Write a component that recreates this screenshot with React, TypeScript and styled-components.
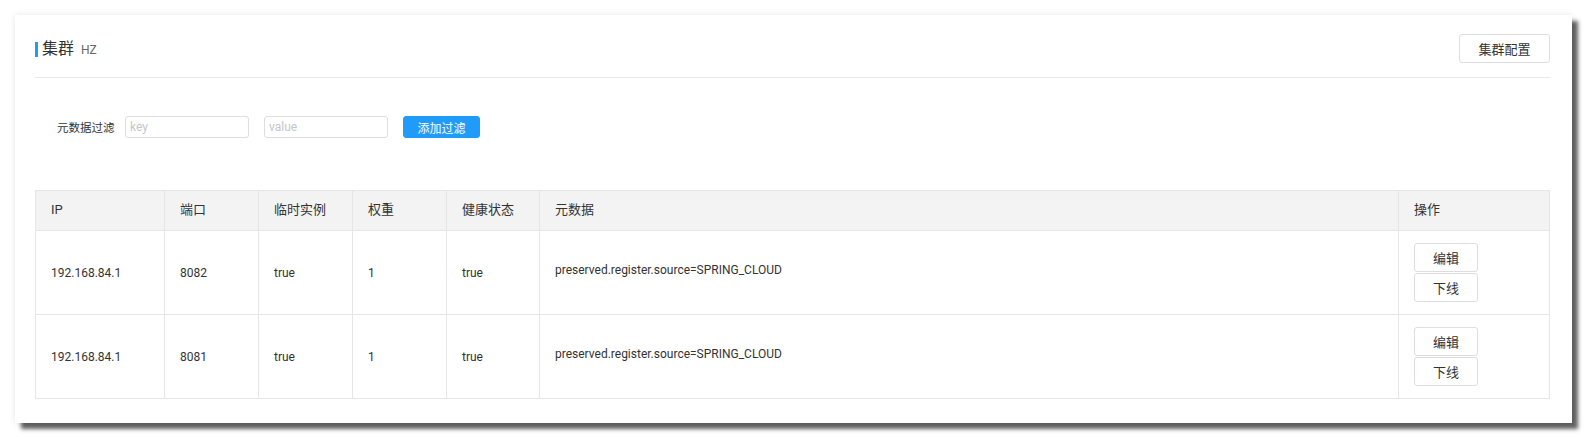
import React from "react";
import styled, { createGlobalStyle } from "styled-components";

const GlobalStyle = createGlobalStyle`
  html, body { margin: 0; padding: 0; background: #fff; }
  body {
    font-family: Roboto, "Noto Sans CJK SC", "Helvetica Neue", Arial, sans-serif;
    color: #333;
    font-size: 12px;
  }
  * { box-sizing: border-box; }
`;

const Page = styled.div`
  padding: 15px 15px 16px 15px;
`;

const Card = styled.div`
  background: #fff;
  width: 1557px;
  padding: 19px 22px 24px 20px;
  box-shadow: 6px 6px 4px rgba(0, 0, 0, 0.62), 0 0 6px rgba(0, 0, 0, 0.1);
`;

const Header = styled.div`
  display: flex;
  align-items: center;
  justify-content: space-between;
  padding-bottom: 14px;
  border-bottom: 1px solid #e8e8e8;
`;

const Title = styled.div`
  display: flex;
  align-items: baseline;
`;

const TitleMain = styled.span`
  position: relative;
  font-size: 16px;
  color: #333;
  padding-left: 7px;
  line-height: 20px;
  &::before {
    content: "";
    position: absolute;
    left: 0;
    top: 3px;
    width: 3px;
    height: 15px;
    background: #209bfa;
  }
`;

const TitleSub = styled.span`
  font-size: 12px;
  color: #666;
  margin-left: 7px;
`;

const OutlineButton = styled.button<{ $w: number; $h: number; $fs: number }>`
  width: ${(p) => p.$w}px;
  height: ${(p) => p.$h}px;
  padding: 0;
  background: #fff;
  border: 1px solid #dcdee3;
  border-radius: 3px;
  color: #333;
  font-family: inherit;
  font-size: ${(p) => p.$fs}px;
  cursor: pointer;
  display: block;
`;

const FilterRow = styled.div`
  display: flex;
  align-items: center;
  margin-top: 38px;
  padding-left: 22px;
`;

const FilterLabel = styled.label`
  width: 60px;
  font-size: 11.5px;
  color: #333;
  margin-right: 8px;
  white-space: nowrap;
`;

const FilterInput = styled.input`
  width: 124px;
  height: 22px;
  border: 1px solid #dcdee3;
  border-radius: 3px;
  padding: 0 4px;
  font-family: inherit;
  font-size: 12px;
  color: #333;
  margin-right: 15px;
  outline: none;
  &::placeholder { color: #c4c6cf; }
`;

const PrimaryButton = styled.button`
  width: 77px;
  height: 22px;
  padding: 0;
  background: #209bfa;
  border: 1px solid #209bfa;
  border-radius: 3px;
  color: #fff;
  font-family: inherit;
  font-size: 12px;
`;

const Table = styled.table`
  margin-top: 52px;
  width: 100%;
  border-collapse: collapse;
  table-layout: fixed;
`;

const Th = styled.th`
  background: #f3f3f3;
  border: 1px solid #e6e6e6;
  text-align: left;
  font-weight: normal;
  font-size: 13px;
  color: #333;
  padding: 9px 15px 10px;
  line-height: 20px;
`;

const Td = styled.td`
  border: 1px solid #e6e6e6;
  padding: 12px 15px 12px;
  font-size: 12px;
  color: #333;
  vertical-align: middle;
  line-height: 18px;
`;

const Meta = styled.div`
  padding-bottom: 5px;
`;

const ActionStack = styled.div`
  display: flex;
  flex-direction: column;
  gap: 1px;
`;

const rows = [
  { ip: "192.168.84.1", port: "8082" },
  { ip: "192.168.84.1", port: "8081" },
];

export default function App() {
  return (
    <>
      <GlobalStyle />
      <Page>
        <Card>
          <Header>
            <Title>
              <TitleMain>集群</TitleMain>
              <TitleSub>HZ</TitleSub>
            </Title>
            <OutlineButton $w={91} $h={29} $fs={13}>集群配置</OutlineButton>
          </Header>
          <FilterRow>
            <FilterLabel>元数据过滤</FilterLabel>
            <FilterInput placeholder="key" />
            <FilterInput placeholder="value" />
            <PrimaryButton>添加过滤</PrimaryButton>
          </FilterRow>
          <Table>
            <colgroup>
              <col style={{ width: 129 }} />
              <col style={{ width: 94 }} />
              <col style={{ width: 94 }} />
              <col style={{ width: 94 }} />
              <col style={{ width: 93 }} />
              <col />
              <col style={{ width: 151 }} />
            </colgroup>
            <thead>
              <tr>
                <Th>IP</Th>
                <Th>端口</Th>
                <Th>临时实例</Th>
                <Th>权重</Th>
                <Th>健康状态</Th>
                <Th>元数据</Th>
                <Th>操作</Th>
              </tr>
            </thead>
            <tbody>
              {rows.map((r) => (
                <tr key={r.port}>
                  <Td>{r.ip}</Td>
                  <Td>{r.port}</Td>
                  <Td>true</Td>
                  <Td>1</Td>
                  <Td>true</Td>
                  <Td>
                    <Meta>preserved.register.source=SPRING_CLOUD</Meta>
                  </Td>
                  <Td>
                    <ActionStack>
                      <OutlineButton $w={64} $h={29} $fs={13}>编辑</OutlineButton>
                      <OutlineButton $w={64} $h={29} $fs={13}>下线</OutlineButton>
                    </ActionStack>
                  </Td>
                </tr>
              ))}
            </tbody>
          </Table>
        </Card>
      </Page>
    </>
  );
}
